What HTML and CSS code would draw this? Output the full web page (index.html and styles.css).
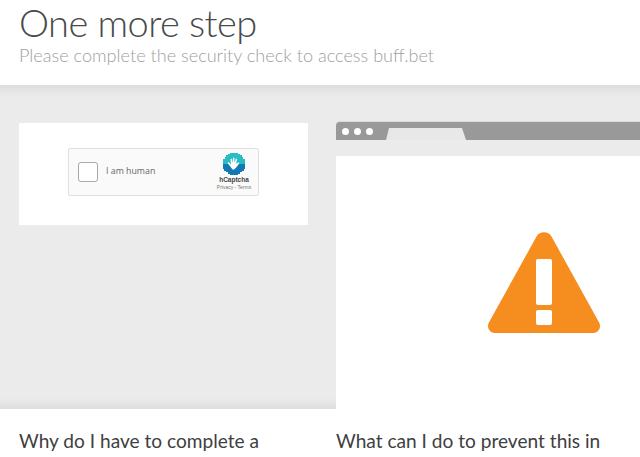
FILE: index.html

```html
<!DOCTYPE html>
<html lang="en">
<head>
    <meta charset="UTF-8">
    <title>Attention Required!</title>
    <link rel="stylesheet" href="styles.css">
</head>
<body>
    <div class="header">
        <h1>One more step</h1>
        <p>Please complete the security check to access buff.bet</p>
    </div>

    <div class="check-section">
        <div class="check-left">
            <div class="captcha-card">
                <div class="captcha-box">
                    <div class="captcha-checkbox"></div>
                    <div class="captcha-label">I am human</div>
                    <div class="captcha-brand">
                        <svg class="captcha-logo" width="22" height="22" viewBox="0 0 22 22">
                            <path d="M7 0h8v1h2v1h2v2h1v2h2v10h-1v2h-2v1h-2v2h-2v1H7v-1H5v-2H3v-1H1v-2H0V6h2V4h1V2h2V1h2z" fill="#1279b4"/>
                            <path d="M7 0h8v1h2v1h2v2h1v2h2v5H0V6h2V4h1V2h2V1h2z" fill="#27bcc6"/>
                            <path d="M6.500 12.500L4.500 10l1-1 2.500 2.200L7.500 6l1.200-.2 1 4.200.3-5.200 1.300 0 .3 5.200 1.300-4.400 1.200.4-1 5 2.400-1.800.9 1-3.400 4.600-2 1.800H9.500z" fill="#fff"/>
                        </svg>
                        <div class="captcha-name">hCaptcha</div>
                        <div class="captcha-links">Privacy - Terms</div>
                    </div>
                </div>
            </div>
        </div>

        <div class="check-right">
            <div class="browser-bar">
                <span class="browser-dot"></span>
                <span class="browser-dot"></span>
                <span class="browser-dot"></span>
                <div class="browser-tab"></div>
            </div>
            <div class="browser-gap"></div>
            <div class="browser-window">
                <svg width="114" height="101" viewBox="0 0 114 101">
                    <path d="M49.500 4.500c3.300-5.600 11.700-5.600 15 0l47.600 86c2.600 4.700-.6 10.500-6.100 10.500H8c-5.500 0-8.700-5.800-6.100-10.500z" fill="#f68d1f"/>
                    <rect x="49" y="27" width="16" height="46" rx="2" fill="#fff"/>
                    <rect x="49" y="78" width="16" height="15" rx="2" fill="#fff"/>
                </svg>
            </div>
        </div>
    </div>

    <div class="faq">
        <h2>Why do I have to complete a</h2>
        <h2>What can I do to prevent this in</h2>
    </div>
</body>
</html>
```

FILE: styles.css

```css
* {
    margin: 0;
    padding: 0;
    box-sizing: border-box;
}

html, body {
    height: 457px;
    overflow: hidden;
}

body {
    font-family: Lato, "Open Sans", sans-serif;
    background: #fff;
    color: #404040;
}

.header {
    height: 85px;
    padding: 0 19px;
    background: #fff;
}

.header h1 {
    font-size: 38px;
    font-weight: 300;
    letter-spacing: -0.55px;
    line-height: 44px;
    color: #4a4a4a;
}

.header p {
    font-size: 18.1px;
    font-weight: 300;
    line-height: 22px;
    color: #a0a0a0;
}

.check-section {
    display: grid;
    grid-template-columns: 336px 304px;
    height: 324px;
    background: #ebebeb;
    box-shadow: inset 0 12px 10px -8px rgba(0, 0, 0, 0.07), inset 0 -12px 10px -8px rgba(0, 0, 0, 0.07);
}

.check-left {
    padding: 38px 0 0 19px;
}

.captcha-card {
    width: 289px;
    height: 102px;
    padding-top: 25px;
    background: #fff;
}

.captcha-box {
    display: flex;
    align-items: center;
    width: 191px;
    height: 48px;
    margin-left: 49px;
    padding: 0 6px 0 9px;
    background: #fafafa;
    border: 1px solid #e0e0e0;
    border-radius: 2px;
}

.captcha-checkbox {
    width: 20px;
    height: 20px;
    background: #fff;
    border: 1px solid #a8a8a8;
    border-radius: 3px;
}

.captcha-label {
    flex: 1;
    margin: 0 0 2px 8px;
    font-family: "Open Sans", sans-serif;
    font-size: 8.8px;
    color: #666;
}

.captcha-brand {
    display: flex;
    flex-direction: column;
    align-items: center;
    width: 36px;
}

.captcha-logo {
    display: block;
}

.captcha-name {
    font-family: "Liberation Sans", sans-serif;
    font-size: 6.5px;
    font-weight: bold;
    line-height: 9px;
    color: #444;
}

.captcha-links {
    font-family: "Liberation Sans", sans-serif;
    font-size: 5px;
    line-height: 7px;
    color: #777;
    white-space: nowrap;
}

.check-right {
    padding-top: 37px;
}

.browser-bar {
    display: flex;
    align-items: center;
    gap: 5px;
    height: 18px;
    padding-left: 6px;
    background: #999;
    border-radius: 4px 0 0 0;
    box-shadow: 0 -1px 0 #dcdcdc;
}

.browser-dot {
    width: 7px;
    height: 7px;
    background: #fff;
    border-radius: 50%;
}

.browser-tab {
    align-self: flex-end;
    width: 80px;
    height: 12px;
    margin-left: 8px;
    background: #e8e8e8;
    clip-path: polygon(0 100%, 3px 0, 76px 0, 80px 100%);
}

.browser-gap {
    height: 16px;
}

.browser-window {
    display: flex;
    align-items: flex-start;
    height: 253px;
    padding: 76px 0 0 151px;
    background: #fff;
}

.faq {
    display: grid;
    grid-template-columns: 317px 304px;
    padding: 19px 0 0 19px;
}

.faq h2 {
    font-size: 19.1px;
    font-weight: 400;
    line-height: 26px;
    color: #404040;
    white-space: nowrap;
}
```
